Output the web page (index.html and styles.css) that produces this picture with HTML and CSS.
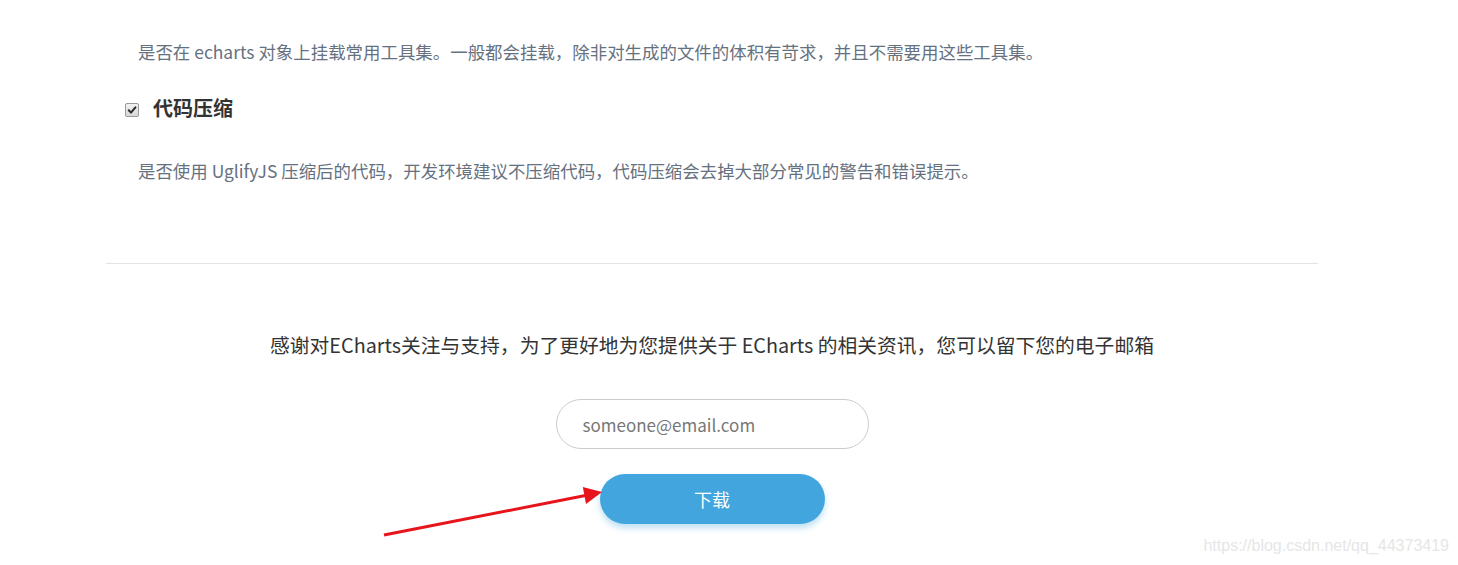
FILE: index.html
```html
<!DOCTYPE html>
<html lang="zh-CN">
<head>
<meta charset="utf-8">
<title>ECharts 下载</title>
<link rel="stylesheet" href="styles.css">
</head>
<body>
<div class="page">
  <section class="options">
    <p class="desc">是否在 echarts 对象上挂载常用工具集。一般都会挂载，除非对生成的文件的体积有苛求，并且不需要用这些工具集。</p>
    <label class="opt-title">
      <span class="check"><svg viewBox="0 0 13 13" width="13" height="13"><path d="M3 6.8 L5.4 9.3 L10.2 3.6" fill="none" stroke="#2b2b2b" stroke-width="2.2" stroke-linecap="round" stroke-linejoin="round"/></svg></span>
      <span class="opt-name">代码压缩</span>
    </label>
    <p class="desc desc-2">是否使用 UglifyJS 压缩后的代码，开发环境建议不压缩代码，代码压缩会去掉大部分常见的警告和错误提示。</p>
  </section>
  <hr class="divider">
  <section class="subscribe">
    <p class="thanks">感谢对ECharts关注与支持，为了更好地为您提供关于 ECharts 的相关资讯，您可以留下您的电子邮箱</p>
    <input class="email" type="text" placeholder="someone@email.com">
    <button class="download" type="button">下载</button>
  </section>
</div>
<svg class="arrow" width="240" height="60" viewBox="0 0 240 60">
  <line x1="4" y1="54" x2="208" y2="14" stroke="#e8141c" stroke-width="3"/>
  <polygon points="222,11 202.8,6 206,23" fill="#e8141c"/>
</svg>
<div class="watermark">https://blog.csdn.net/qq_44373419</div>
</body>
</html>
```
FILE: styles.css
```css
html, body {
  margin: 0;
  padding: 0;
  background: #ffffff;
}
body {
  font-family: "Noto Sans CJK SC", "Noto Sans", sans-serif;
  position: relative;
  width: 1458px;
  height: 565px;
  overflow: hidden;
}
.page {
  width: 1212px;
  margin-left: 106px;
  padding-top: 39px;
}
.options {
  padding-left: 19px;
}
.desc {
  margin: 0 0 0 13px;
  font-size: 17.45px;
  line-height: 26px;
  color: #66717f;
  white-space: nowrap;
}
.opt-title {
  display: flex;
  align-items: center;
  margin-top: 28px;
  height: 30px;
}
.check {
  width: 12px;
  height: 12px;
  border: 1px solid #9a9a9a;
  border-radius: 2px;
  background: linear-gradient(#f2f2f2, #d8d8d8);
  display: flex;
  align-items: center;
  justify-content: center;
  margin-top: 3px;
}
.check svg {
  display: block;
  width: 12px;
  height: 12px;
}
.opt-name {
  margin-left: 14px;
  font-size: 20px;
  font-weight: 700;
  color: #333333;
  line-height: 30px;
}
.desc-2 {
  margin-top: 35px;
}
.divider {
  margin: 79px 0 0;
  border: 0;
  border-top: 1px solid #e3e3e3;
  height: 0;
}
.subscribe {
  display: flex;
  flex-direction: column;
  align-items: center;
  padding-top: 66px;
}
.thanks {
  margin: 0;
  font-size: 19.8px;
  line-height: 30px;
  color: #333333;
  white-space: nowrap;
}
.email {
  margin-top: 39px;
  box-sizing: border-box;
  width: 313px;
  height: 50px;
  border: 1px solid #cccccc;
  border-radius: 25px;
  padding: 0 0 0 26px;
  font-family: "Noto Sans CJK SC", "Noto Sans", sans-serif;
  font-size: 17px;
  color: #555555;
  outline: none;
  background: #fff;
}
.email::placeholder {
  color: #777777;
}
.download {
  margin-top: 25px;
  width: 225px;
  height: 50px;
  border: 0;
  border-radius: 25px;
  background: #42a5dd;
  color: #ffffff;
  font-family: "Noto Sans CJK SC", "Noto Sans", sans-serif;
  font-size: 18px;
  box-shadow: 0 4px 6px rgba(66, 165, 221, 0.35);
  cursor: pointer;
}
.arrow {
  position: absolute;
  left: 380px;
  top: 481px;
}
.watermark {
  position: absolute;
  right: 9px;
  top: 537px;
  font-family: "Liberation Sans", Arial, sans-serif;
  font-size: 16px;
  color: #e6e6e6;
}
```
